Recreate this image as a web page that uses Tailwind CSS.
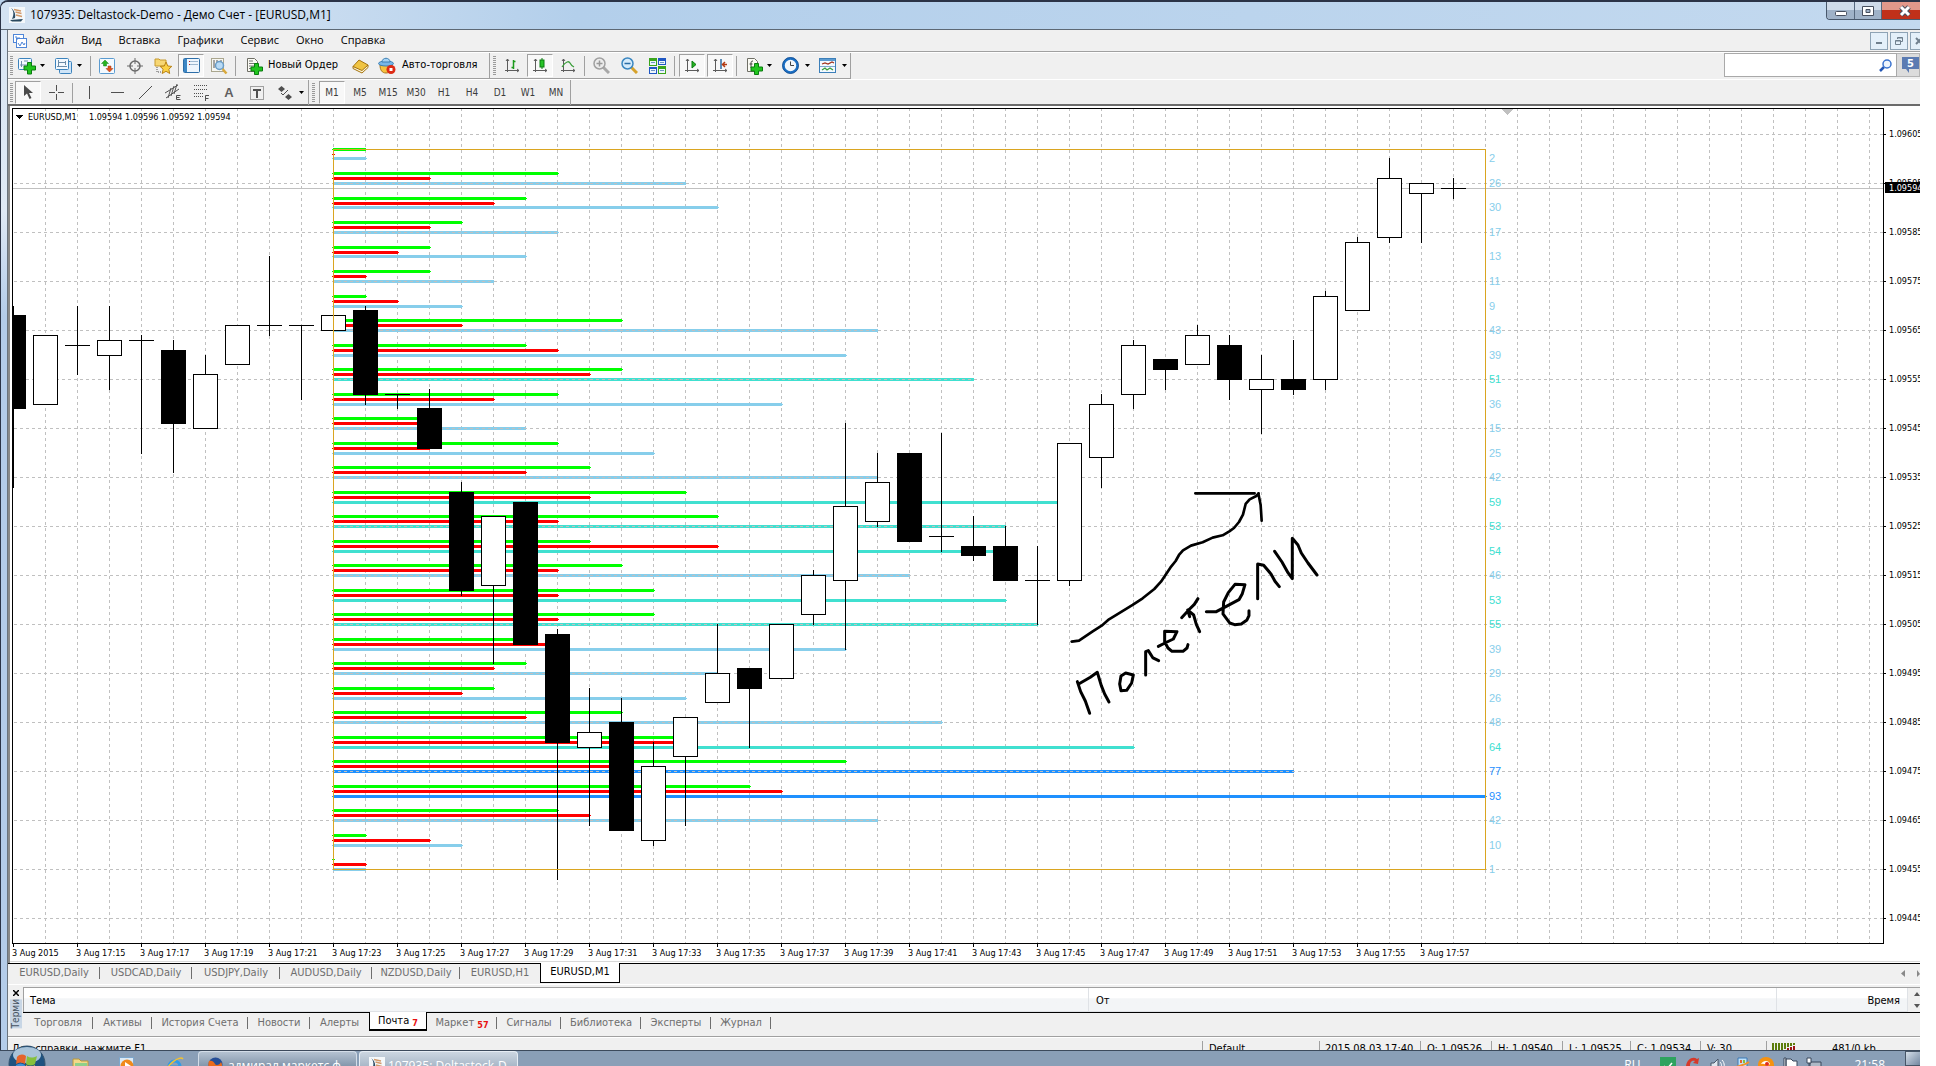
<!DOCTYPE html>
<html lang="ru">
<head>
  <meta charset="UTF-8">
  <meta name="viewport" content="width=device-width, initial-scale=1.0">
  <title>107935: Deltastock-Demo - Демо Счет - [EURUSD,M1]</title>
  <script src="https://cdn.jsdelivr.net/npm/@tailwindcss/browser@4"></script>
</head>
<body class="h-screen overflow-hidden bg-white pr-4 font-['DejaVu_Sans_Condensed','DejaVu_Sans',sans-serif] text-[11px] text-black">
  <div class="flex h-full flex-col overflow-hidden bg-[#b9d1ea]">

    <div class="flex min-h-0 flex-1 flex-col overflow-hidden rounded-tl-lg border-l border-t-2 border-[#2b3346] bg-gradient-to-b from-[#d9e6f4] via-[#dfe9f5] via-20% to-[#b4cce9] to-30%">
      <!-- Title bar -->
      <header class="flex h-7 shrink-0 items-start justify-between border-b border-[#5d6874] bg-gradient-to-r from-[#d3e2f2] from-10% via-[#b3cfeb] via-30% to-[#c3d9ef] pl-2 font-['Open_Sans','Noto_Sans',sans-serif] text-[12px]">
        <div class="flex h-[25px] items-center gap-[5px]">
          <svg class="size-4" viewBox="0 0 16 16"><rect width="16" height="16" fill="#f4f8fb"/><path d="M2 1c3 3 3 7 1 11l3-1C7 7 5 3 2 1z" fill="#2c4d66"/><path d="M5 2.500l7 1.500M6.500 5l6 1.500M7 8l6 1.500" stroke="#d39a6a" stroke-width="1.500"/><path d="M1 13l13-1-2 2.500H3z" fill="#28485f"/></svg>
          <h1>107935: Deltastock-Demo - Демо Счет - [EURUSD,M1]</h1>
        </div>
        <div class="flex h-[18px] overflow-hidden rounded-bl border-b border-l border-[#48586c]">
          <button aria-label="Свернуть" class="flex w-7 items-center justify-center border-r border-[#56687e] bg-gradient-to-b from-[#cfdbe9] from-50% to-[#9fb2c8] to-50%"><svg class="h-3 w-3" viewBox="0 0 12 12"><rect x=".5" y="6.500" width="11" height="4" rx="1" fill="#fff" stroke="#474f5e"/></svg></button>
          <button aria-label="Развернуть" class="flex w-[27px] items-center justify-center border-r border-[#56687e] bg-gradient-to-b from-[#cfdbe9] from-50% to-[#9fb2c8] to-50%"><svg class="h-3 w-3" viewBox="0 0 12 12"><path d="M.5 1.500h11v9H.5zM4 4.500h4v3H4z" fill="#fff" fill-rule="evenodd" stroke="#474f5e"/></svg></button>
          <button aria-label="Закрыть" class="flex w-[38px] items-center justify-center bg-gradient-to-b from-[#e2988a] from-45% to-[#c0301a] to-50% pl-2"><svg class="h-3 w-3" viewBox="0 0 12 12"><path d="M2 2l8 8M10 2l-8 8" stroke="#474f5e" stroke-width="5"/><path d="M2 2l8 8M10 2l-8 8" stroke="#fff" stroke-width="3"/></svg></button>
        </div>
      </header>

      <div class="ml-[6px] flex min-h-0 flex-1 flex-col border-l border-[#6b747e] bg-[#f0f0f0]">
        <!-- Main menu -->
        <nav class="flex h-[22px] shrink-0 items-center border-b border-[#a0a0a0] font-['Open_Sans','Noto_Sans',sans-serif] text-[11px]">
          <svg class="ml-[5px] size-[14px]" viewBox="0 0 14 14" fill="none" stroke="#4f86d8"><rect x=".5" y=".5" width="10" height="8" fill="#fff"/><rect x="3.500" y="4.500" width="10" height="9" fill="#fff"/><path d="M2 3h2v3M6 3v2M5 9l2 3 2-4 2 3 1-2"/></svg>
          <div class="ml-[9px] flex gap-[17px]">
            <button>Файл</button>
            <button>Вид</button>
            <button>Вставка</button>
            <button>Графики</button>
            <button>Сервис</button>
            <button>Окно</button>
            <button>Справка</button>
          </div>
          <div class="ml-auto flex w-[50px] shrink-0 gap-[2px] overflow-hidden">
            <button aria-label="Свернуть окно" class="flex h-[18px] w-[18px] shrink-0 items-center justify-center border border-[#8ea3b5] bg-[#e4f0fa]"><svg class="size-2" viewBox="0 0 8 8"><path d="M1 6h6" stroke="#70808e" stroke-width="2"/></svg></button>
            <button aria-label="Восстановить окно" class="flex h-[18px] w-[18px] shrink-0 items-center justify-center border border-[#8ea3b5] bg-[#e4f0fa]"><svg class="size-2" viewBox="0 0 8 8" fill="none" stroke="#70808e"><path d="M2.500 2V.500h5v4H6M.500 3.500h5v4h-5zM.500 4h5M2.500 1h5"/></svg></button>
            <button aria-label="Закрыть окно" class="flex h-[18px] w-[18px] shrink-0 items-center justify-center border border-[#8ea3b5] bg-[#e4f0fa]"><svg class="size-2" viewBox="0 0 8 8"><path d="M1 1l6 6M7 1L1 7" stroke="#70808e" stroke-width="2"/></svg></button>
          </div>
        </nav>

        <!-- Standard toolbar -->
        <div class="flex h-[27px] shrink-0 items-start border-t border-white">
          <div class="flex h-[26px] items-center border-r border-b border-[#a0a0a0]">
            <i class="mr-px ml-[2px] h-5 w-[3px] bg-[repeating-linear-gradient(#9a9a9a_0_1px,transparent_1px_2px)]"></i>
            <button aria-label="Новый график" class="flex h-6 w-[37px] items-center gap-1 pl-1">
              <svg class="size-[18px]" viewBox="0 0 18 18"><rect x=".5" y="1.500" width="13" height="11" rx="1" fill="#f3f9ff" stroke="#3c83bd"/><path d="M3.500 4v6M2 8h8M6 4h4" stroke="#6c8ca8" fill="none"/><path d="M9.500 5.500h4v3.500h4v4h-4v4h-4v-4H6V9h3.500z" fill="#22c51f" stroke="#0b7c10"/></svg>
              <svg class="h-[3px] w-[5px]" viewBox="0 0 5 3"><path d="M0 0h5L2.500 3z"/></svg>
            </button>
            <button aria-label="Профили" class="flex h-6 w-[37px] items-center gap-1 pl-1">
              <svg class="size-[18px]" viewBox="0 0 18 18"><rect x="4.500" y="4.500" width="12" height="12" rx="1" fill="#cfe5f8" stroke="#3c83bd"/><rect x=".5" y="1.500" width="13" height="11" rx="1" fill="#f3f9ff" stroke="#3c83bd"/><path d="M3.500 3v7M2 9.500h10M3 5.500h8M10.500 4v4" stroke="#6c8ca8" fill="none"/></svg>
              <svg class="h-[3px] w-[5px]" viewBox="0 0 5 3"><path d="M0 0h5L2.500 3z"/></svg>
            </button>
            <i class="mx-[2px] h-5 w-px bg-[#a0a0a0]"></i>
            <button aria-label="Обзор рынка" class="flex h-6 w-7 items-center justify-center"><svg class="size-4" viewBox="0 0 16 16"><rect x=".5" y=".5" width="15" height="15" rx="1" fill="#f4faff" stroke="#5b9bd0"/><path d="M6 2l3.500 3.500H7.500V8h-3V5.500H2.500z" fill="#25b321" stroke="#14801a" stroke-width=".5"/><path d="M10.500 14L7 10.500h2V8h3v2.500h2z" fill="#e0531f" stroke="#a33710" stroke-width=".5"/></svg></button>
            <button aria-label="Окно данных" class="flex h-6 w-7 items-center justify-center"><svg class="size-4" viewBox="0 0 16 16" fill="none" stroke="#6b6b6b"><circle cx="8" cy="8" r="5" stroke-width="1.500"/><path d="M8 0v6M8 10v6M0 8h6M10 8h6"/></svg></button>
            <button aria-label="Навигатор" class="flex h-6 w-7 items-center justify-center"><svg class="size-[18px]" viewBox="0 0 18 18"><path d="M1 2h4l1 1h6v6H1z" fill="#f7d774" stroke="#c69a2e"/><path d="M3 10v5h5" stroke="#555" stroke-dasharray="1 1" fill="none"/><path d="M12 5l1.800 4 4 .4-3 2.800.9 4.300L12 14.300l-3.800 2.200.9-4.300-3-2.800 4.200-.4z" fill="#fbd145" stroke="#b98316"/></svg></button>
            <button aria-label="Терминал" class="mx-px flex h-[23px] w-[26px] items-center justify-center border border-white border-t-[#a0a0a0] border-l-[#a0a0a0] bg-[#f8f8f8]"><svg class="h-[15px] w-[17px]" viewBox="0 0 17 15"><rect x=".5" y=".5" width="16" height="14" rx="1" fill="#eef6fd" stroke="#2d6ea8"/><path d="M1 1h3v13H1z" fill="#3d87c5"/><path d="M6 3.500h9M6 6.500h9" stroke="#9db8d0"/><path d="M6 3.500h1M6 6.500h1" stroke="#b22"/></svg></button>
            <button aria-label="Тестер стратегий" class="flex h-6 w-7 items-center justify-center"><svg class="size-[18px]" viewBox="0 0 18 18"><rect x="1.500" y="1.500" width="12" height="13" fill="#f7f7f2" stroke="#aaa68f"/><path d="M4 3v8M7 3v3M11 3v4" stroke="#555"/><circle cx="9.500" cy="8.500" r="4" fill="#b9dbf5" stroke="#6a9cc5" stroke-width="1.500"/><path d="M12.500 12l4 4.500" stroke="#d9a93c" stroke-width="2.500"/></svg></button>
            <i class="mx-[2px] h-5 w-px bg-[#a0a0a0]"></i>
            <button class="flex h-6 w-[108px] items-center gap-[5px] pl-2 whitespace-nowrap">
              <svg class="h-[18px] w-[17px] shrink-0" viewBox="0 0 17 18"><path d="M1.500 1.500h7l3 3v10h-10z" fill="#fbfbf4" stroke="#6f6f66"/><path d="M3 4h4M3 6.500h6M3 9h6M3 11.500h4" stroke="#777"/><path d="M8.500 6.500h4v3.500h4v4h-4v3.500h-4V14H5v-4h3.500z" fill="#22c51f" stroke="#0b7c10"/></svg>
              Новый Ордер</button>
            <button aria-label="MetaEditor" class="flex h-6 w-7 items-center justify-center"><svg class="h-4 w-[17px]" viewBox="0 0 17 16"><path d="M1 8.500L7 2l9 5-6 7z" fill="#f0c443" stroke="#a5730f"/><path d="M1 8.500l9 4 6-5.500v2.500L10 15 1 10.500z" fill="#fbf3d4" stroke="#a5730f"/></svg></button>
            <button class="flex h-6 w-[115px] items-center gap-[6px] pl-1 whitespace-nowrap">
              <svg class="size-[18px] shrink-0" viewBox="0 0 18 18"><path d="M2 8h12c0 5-2 8-6 8S2 13 2 8z" fill="#f6c23e" stroke="#a9741a"/><ellipse cx="8" cy="6.500" rx="7.500" ry="2.500" fill="#79b7e8" stroke="#3e80b4"/><path d="M4 5c0-5 8-5 8 0z" fill="#a5d2f4" stroke="#3e80b4"/><circle cx="13" cy="12.500" r="4.500" fill="#dd2c16"/><rect x="11.500" y="11" width="3" height="3" fill="#fff"/></svg>
              Авто-торговля</button>
          </div>
          <div class="flex h-[26px] items-center border-r border-b border-[#a0a0a0]">
            <i class="mr-[2px] ml-[3px] h-5 w-[3px] bg-[repeating-linear-gradient(#9a9a9a_0_1px,transparent_1px_2px)]"></i>
            <button aria-label="Бары" class="flex h-6 w-7 items-center justify-center"><svg class="size-[15px]" viewBox="0 0 15 15" fill="none"><path d="M2.500 1v13M0 12.500h14M1 3l1.500-2L4 3M12 11l2 1.500-2 1.500" stroke="#5c5c5c"/><path d="M8.500 2v9M6.500 9.500h2M8.500 3.500h2" stroke="#1c9a1c" stroke-width="1.500"/></svg></button>
            <button aria-label="Японские свечи" class="mx-px flex h-[23px] w-[26px] items-center justify-center border border-white border-t-[#a0a0a0] border-l-[#a0a0a0] bg-[#f8f8f8]"><svg class="size-[15px]" viewBox="0 0 15 15" fill="none"><path d="M2.500 1v13M0 12.500h14M1 3l1.500-2L4 3M12 11l2 1.500-2 1.500" stroke="#5c5c5c"/><path d="M9 0v11" stroke="#0b7c10"/><rect x="7" y="2" width="4" height="7" fill="#27c427" stroke="#0b7c10"/></svg></button>
            <button aria-label="Линия" class="flex h-6 w-7 items-center justify-center"><svg class="size-[15px]" viewBox="0 0 15 15" fill="none"><path d="M2.500 1v13M0 12.500h14M1 3l1.500-2L4 3M12 11l2 1.500-2 1.500" stroke="#5c5c5c"/><path d="M1 9C5 3 8 3 9 5s2 3 4 4" stroke="#3a9e3a" stroke-width="1.300"/></svg></button>
            <i class="mx-[2px] h-5 w-px bg-[#a0a0a0]"></i>
            <button aria-label="Увеличить" class="flex h-6 w-7 items-center justify-center"><svg class="size-[17px]" viewBox="0 0 17 17"><path d="M10 10l6 6" stroke="#a8a8a8" stroke-width="3"/><circle cx="6.500" cy="6.500" r="5.500" fill="#ececec" stroke="#a0a0a0" stroke-width="1.500"/><path d="M3.500 6.500h6M6.500 3.500v6" stroke="#999" stroke-width="1.500"/></svg></button>
            <button aria-label="Уменьшить" class="flex h-6 w-7 items-center justify-center"><svg class="size-[17px]" viewBox="0 0 17 17"><path d="M10 10l6 6" stroke="#d6a22b" stroke-width="3"/><circle cx="6.500" cy="6.500" r="5.500" fill="#d5ebfb" stroke="#3a86c0" stroke-width="1.500"/><path d="M3.500 6.500h6" stroke="#2a6da5" stroke-width="1.500"/></svg></button>
            <button aria-label="Окна рядом" class="flex h-6 w-7 items-center justify-center"><svg class="h-4 w-[17px]" viewBox="0 0 17 16"><path d="M0 0h8v8H0zM9 8h8v8H9z" fill="#3aa51c"/><path d="M9 0h8v7H9zM0 9h8v7H0z" fill="#1f57c3"/><path d="M1 3h6v4H1zM10 3h6v3h-6zM1 11h6v4H1zM10 11h6v4h-6z" fill="#eef5fb"/><path d="M2 4.500h4M11 4.500h4M2 12.500h4M11 12.500h4" stroke="#6f95c4"/></svg></button>
            <i class="mx-[3px] h-5 w-px bg-[#a0a0a0]"></i>
            <button aria-label="Автопрокрутка" class="mx-px flex h-[23px] w-[26px] items-center justify-center border border-white border-t-[#a0a0a0] border-l-[#a0a0a0] bg-[#f8f8f8]"><svg class="size-[15px]" viewBox="0 0 15 15" fill="none"><path d="M2.500 1v13M0 12.500h14M1 3l1.500-2L4 3M12 11l2 1.500-2 1.500" stroke="#5c5c5c"/><path d="M7 3v7l4-3.500z" fill="#25b321" stroke="#0b7c10"/></svg></button>
            <button aria-label="Сдвиг графика" class="mx-px flex h-[23px] w-[26px] items-center justify-center border border-white border-t-[#a0a0a0] border-l-[#a0a0a0] bg-[#f8f8f8]"><svg class="size-[15px]" viewBox="0 0 15 15" fill="none"><path d="M2.500 1v13M0 12.500h14M1 3l1.500-2L4 3M12 11l2 1.500-2 1.500" stroke="#5c5c5c"/><path d="M8 1v10" stroke="#2c6aa0" stroke-width="1.500"/><path d="M14 6.500H9M12 4L9.500 6.500 12 9" stroke="#b33a12" stroke-width="1.500"/></svg></button>
            <i class="mx-[2px] h-5 w-px bg-[#a0a0a0]"></i>
            <button aria-label="Индикаторы" class="flex h-6 w-[37px] items-center gap-1 pl-[7px]">
              <svg class="h-[18px] w-[17px]" viewBox="0 0 17 18"><path d="M1.500 1.500h7l3 3v10h-10z" fill="#fbfbf4" stroke="#6f6f66"/><path d="M7 4c-2 0-2 1-2 3v4M3.500 7h3" stroke="#444" fill="none"/><path d="M8.500 6.500h4v3.500h4v4h-4v3.500h-4V14H5v-4h3.500z" fill="#22c51f" stroke="#0b7c10"/></svg>
              <svg class="h-[3px] w-[5px]" viewBox="0 0 5 3"><path d="M0 0h5L2.500 3z"/></svg>
            </button>
            <button aria-label="Периоды" class="flex h-6 w-[37px] items-center gap-[6px] pl-[6px]">
              <svg class="size-[17px]" viewBox="0 0 17 17"><circle cx="8.500" cy="8.500" r="7" fill="#f2f6fa" stroke="#1b6fc4" stroke-width="2.500"/><circle cx="8.500" cy="8.500" r="8" fill="none" stroke="#124a8c" stroke-width=".8"/><path d="M8.500 4.500v4h3.500" stroke="#444" fill="none"/></svg>
              <svg class="h-[3px] w-[5px]" viewBox="0 0 5 3"><path d="M0 0h5L2.500 3z"/></svg>
            </button>
            <button aria-label="Шаблоны" class="flex h-6 w-[37px] items-center gap-[6px] pl-[6px]">
              <svg class="h-[15px] w-[17px]" viewBox="0 0 17 15"><rect x=".5" y=".5" width="16" height="14" fill="#f3f9ff" stroke="#3c7fb9"/><path d="M1 1h15v2H1z" fill="#5c9bd0"/><path d="M3 6l3-1 3 1 4-2 2 1" stroke="#a0321c" fill="none" stroke-width="1.300"/><path d="M1 8.500h15" stroke="#7ca9cf"/><path d="M3 12l3-2 2 2 3-2 3 2" stroke="#3a9e3a" fill="none" stroke-width="1.300"/></svg>
              <svg class="h-[3px] w-[5px]" viewBox="0 0 5 3"><path d="M0 0h5L2.500 3z"/></svg>
            </button>
          </div>
          <form class="ml-auto flex h-6 w-[196px] overflow-hidden" onsubmit="return false">
            <label class="flex w-[173px] shrink-0 items-center border border-[#a9a9a9] bg-white pr-1">
              <input type="search" aria-label="Поиск" class="min-w-0 flex-1 px-1 outline-none">
              <svg class="size-[13px]" viewBox="0 0 13 13" fill="none"><path d="M1 12l4-4" stroke="#2456b5" stroke-width="2.500"/><circle cx="8" cy="5" r="4" fill="#eef5fd" stroke="#3a73cf" stroke-width="1.500"/></svg>
            </label>
            <button aria-label="Сообщения: 5" class="flex flex-1 items-center border border-l-0 border-[#b5b5b5] bg-[#dcdcdc] pl-[5px]"><svg class="h-4 w-[17px] shrink-0" viewBox="0 0 17 16"><path d="M0 0h17v12H7v4l-3-4H0z" fill="#5b7bb2"/><text x="5" y="10" font-size="11" font-weight="bold" fill="#fff">5</text></svg></button>
          </form>
        </div>

        <!-- Drawing tools and periods -->
        <div class="flex h-[27px] shrink-0 items-start border-t border-b-2 border-t-white border-b-[#6b6b6b] text-[10px] text-[#3c3c3c]">
          <div class="flex h-[25px] items-center border-r border-[#a0a0a0]">
            <i class="mr-px ml-[2px] h-5 w-[3px] bg-[repeating-linear-gradient(#9a9a9a_0_1px,transparent_1px_2px)]"></i>
            <button aria-label="Курсор" class="mx-px flex h-[23px] w-[26px] items-center justify-center border border-white border-t-[#a0a0a0] border-l-[#a0a0a0] bg-[#f8f8f8]"><svg class="h-[15px] w-[10px]" viewBox="0 0 10 15"><path d="M1 0v11l3-2.500L6.500 14l2-1L6 8h4z" fill="#4a4a4a"/></svg></button>
            <button aria-label="Перекрестие" class="flex h-6 w-7 items-center justify-center"><svg class="size-[15px]" viewBox="0 0 15 15"><path d="M7.500 0v6M7.500 9v6M0 7.500h6M9 7.500h6" stroke="#505050"/></svg></button>
            <i class="mx-[2px] h-5 w-px bg-[#a0a0a0]"></i>
            <button aria-label="Вертикальная линия" class="flex h-6 w-7 items-center justify-center"><svg class="size-[13px]" viewBox="0 0 13 13"><path d="M6.500 0v13" stroke="#505050"/></svg></button>
            <button aria-label="Горизонтальная линия" class="flex h-6 w-7 items-center justify-center"><svg class="size-[13px]" viewBox="0 0 13 13"><path d="M0 6.500h13" stroke="#505050"/></svg></button>
            <button aria-label="Трендовая линия" class="flex h-6 w-7 items-center justify-center"><svg class="size-[13px]" viewBox="0 0 13 13"><path d="M0 13L13 0" stroke="#505050"/></svg></button>
            <button aria-label="Равноудаленный канал" class="flex h-6 w-7 items-center justify-center"><svg class="h-[17px] w-4" viewBox="0 0 16 17" stroke="#505050" fill="none"><path d="M0 9L13 1M1 14L14 5M3 14L6 4M6 12L9 2M9 10l3-10"/><path d="M15.500 11.500h-4v4h4M11.500 13.500h3"/></svg></button>
            <button aria-label="Линии Фибоначчи" class="flex h-6 w-7 items-center justify-center"><svg class="h-[17px] w-[15px]" viewBox="0 0 15 17" stroke="#505050" fill="none"><path d="M0 1.500h13M0 5.500h13M0 9.500h10M0 12.500h9" stroke-dasharray="1 1"/><path d="M11.500 17v-5.500h3.500M11.500 14.500h3"/></svg></button>
            <button aria-label="Текст" class="flex h-6 w-7 items-center justify-center font-['Liberation_Sans',sans-serif] text-[13px] font-bold text-[#606060]">A</button>
            <button aria-label="Метка" class="flex h-6 w-7 items-center justify-center"><svg class="size-[14px]" viewBox="0 0 14 14" fill="none" stroke="#505050"><path d="M.5.500h13v13H.500z" stroke-dasharray="1 1"/><path d="M3 4h8M7 4v8" stroke-width="2"/></svg></button>
            <button aria-label="Стрелки" class="flex h-6 w-[37px] items-center gap-[7px] pl-[7px]">
              <svg class="size-[14px]" viewBox="0 0 14 14" fill="#505050"><path d="M3.500 0L7 3 3.500 6 0 3zM10.500 8l3.500 3-3.500 3L7 11z"/><path d="M3 7l2 2 5-5" stroke="#505050" fill="none"/></svg>
              <svg class="h-[3px] w-[5px]" viewBox="0 0 5 3"><path d="M0 0h5L2.500 3z"/></svg>
            </button>
          </div>
          <div class="flex h-[25px] items-center border-r border-[#a0a0a0]">
            <i class="mx-[3px] h-5 w-[3px] bg-[repeating-linear-gradient(#9a9a9a_0_1px,transparent_1px_2px)]"></i>
            <button class="mx-px h-[23px] w-[26px] border border-white border-t-[#a0a0a0] border-l-[#a0a0a0] bg-[#f8f8f8]">M1</button>
            <button class="h-6 w-7">M5</button>
            <button class="h-6 w-7">M15</button>
            <button class="h-6 w-7">M30</button>
            <button class="h-6 w-7">H1</button>
            <button class="h-6 w-7">H4</button>
            <button class="h-6 w-7">D1</button>
            <button class="h-6 w-7">W1</button>
            <button class="h-6 w-7">MN</button>
          </div>
        </div>

        <!-- Chart -->
        <main class="min-h-0 flex-1 overflow-hidden border-l-2 border-[#8a8a8a] bg-white">
          <svg id="chart" class="block h-full w-full" viewBox="10 106 1910 857" preserveAspectRatio="xMinYMin slice" shape-rendering="crispEdges" font-size="9"></svg>
        </main>

        <!-- Chart tabs -->
        <div class="flex h-[21px] shrink-0 items-start border-t border-black text-[#6e6e6e]">
          <button class="h-[18px] w-[92px] bg-[linear-gradient(#6e6e6e,#6e6e6e)] bg-[length:1px_12px] bg-right bg-no-repeat">EURUSD,Daily</button>
          <button class="h-[18px] w-[92px] bg-[linear-gradient(#6e6e6e,#6e6e6e)] bg-[length:1px_12px] bg-right bg-no-repeat">USDCAD,Daily</button>
          <button class="h-[18px] w-[88px] bg-[linear-gradient(#6e6e6e,#6e6e6e)] bg-[length:1px_12px] bg-right bg-no-repeat">USDJPY,Daily</button>
          <button class="h-[18px] w-[92px] bg-[linear-gradient(#6e6e6e,#6e6e6e)] bg-[length:1px_12px] bg-right bg-no-repeat">AUDUSD,Daily</button>
          <button class="h-[18px] w-[88px] bg-[linear-gradient(#6e6e6e,#6e6e6e)] bg-[length:1px_12px] bg-right bg-no-repeat">NZDUSD,Daily</button>
          <button class="h-[18px] w-[80px]">EURUSD,H1</button>
          <button class="-mt-px h-[20px] w-[80px] border border-t-0 border-black bg-white text-black">EURUSD,M1</button>
          <div class="mt-[6px] ml-auto flex gap-3 overflow-hidden">
            <button aria-label="Назад"><svg class="block h-[7px] w-1" viewBox="0 0 4 7"><path d="M4 0v7L0 3.500z" fill="#888"/></svg></button>
            <button aria-label="Вперед"><svg class="block h-[7px] w-[3px]" viewBox="0 0 3 7"><path d="M0 0v7l3-3z" fill="#888"/></svg></button>
          </div>
        </div>

        <!-- Terminal -->
        <section class="flex h-[53px] shrink-0 border-t border-b border-t-white border-b-[#a0a0a0]">
          <div class="flex w-[15px] flex-col items-center gap-[3px] pt-[5px]">
            <button aria-label="Закрыть терминал"><svg class="block size-[6px]" viewBox="0 0 6 6"><path d="M0 0l6 6M6 0L0 6" stroke="#000" stroke-width="1.500"/></svg></button>
            <span class="rotate-180 bg-[#c8d6e5] text-[10px] leading-3 text-[#44525f] [writing-mode:vertical-rl]">Терми</span>
          </div>
          <div class="mt-[2px] min-w-0 flex-1">
            <div class="flex h-[25px] border-t border-l border-[#a0a0a0] bg-white">
              <table class="h-[24px] flex-1 table-fixed border-collapse bg-gradient-to-b from-white from-40% to-[#f3f5f7] to-45%">
                <colgroup><col><col class="w-[688px]"><col class="w-[131px]"></colgroup>
                <thead><tr>
                  <th class="border-r border-b border-[#dfe2e6] pt-[3px] pl-[6px] text-left font-normal">Тема</th>
                  <th class="border-r border-b border-[#dfe2e6] pt-[3px] pl-[7px] text-left font-normal">От</th>
                  <th class="border-r border-b border-[#dfe2e6] pt-[3px] pr-[7px] text-right font-normal">Время</th>
                </tr></thead>
              </table>
              <div class="flex w-3 flex-col items-end justify-between bg-[#f0f0f0] py-1">
                <svg class="h-1 w-[6px]" viewBox="0 0 6 4"><path d="M0 4h6L3 0z" fill="#555"/></svg>
                <svg class="h-1 w-[6px]" viewBox="0 0 6 4"><path d="M0 0h6L3 4z" fill="#555"/></svg>
              </div>
            </div>
            <div class="flex h-[20px] items-start border-t border-black text-[#6e6e6e]">
              <button class="h-5 w-[70px] bg-[linear-gradient(#6e6e6e,#6e6e6e)] bg-[length:1px_12px] bg-right bg-no-repeat">Торговля</button>
              <button class="h-5 w-[59px] bg-[linear-gradient(#6e6e6e,#6e6e6e)] bg-[length:1px_12px] bg-right bg-no-repeat">Активы</button>
              <button class="h-5 w-[96px] bg-[linear-gradient(#6e6e6e,#6e6e6e)] bg-[length:1px_12px] bg-right bg-no-repeat">История Счета</button>
              <button class="h-5 w-[62px] bg-[linear-gradient(#6e6e6e,#6e6e6e)] bg-[length:1px_12px] bg-right bg-no-repeat">Новости</button>
              <button class="h-5 w-[59px]">Алерты</button>
              <button class="-mt-px h-[19px] w-[58px] border border-t-0 border-b-2 border-black bg-white leading-4 text-black">Почта <sub class="text-[9px] leading-none font-bold text-[#e81010]">7</sub></button>
              <button class="h-5 w-[70px] bg-[linear-gradient(#6e6e6e,#6e6e6e)] bg-[length:1px_12px] bg-right bg-no-repeat">Маркет <sub class="text-[9px] leading-none font-bold text-[#e81010]">57</sub></button>
              <button class="h-5 w-[64px] bg-[linear-gradient(#6e6e6e,#6e6e6e)] bg-[length:1px_12px] bg-right bg-no-repeat">Сигналы</button>
              <button class="h-5 w-[80px] bg-[linear-gradient(#6e6e6e,#6e6e6e)] bg-[length:1px_12px] bg-right bg-no-repeat">Библиотека</button>
              <button class="h-5 w-[70px] bg-[linear-gradient(#6e6e6e,#6e6e6e)] bg-[length:1px_12px] bg-right bg-no-repeat">Эксперты</button>
              <button class="h-5 w-[60px] bg-[linear-gradient(#6e6e6e,#6e6e6e)] bg-[length:1px_12px] bg-right bg-no-repeat">Журнал</button>
            </div>
          </div>
        </section>

        <!-- Status bar -->
        <footer class="flex h-[13px] shrink-0 items-start overflow-hidden border-t border-white pt-[3px] leading-4 whitespace-nowrap">
          <span class="flex-1 pl-1">Для справки, нажмите F1</span>
          <span class="w-[117px] border-l border-[#a0a0a0] pl-[6px]">Default</span>
          <span class="w-[101px] border-l border-[#a0a0a0] pl-[5px]">2015.08.03 17:40</span>
          <span class="w-[71px] border-l border-[#a0a0a0] pl-[6px]">O: 1.09526</span>
          <span class="w-[71px] border-l border-[#a0a0a0] pl-[6px]">H: 1.09540</span>
          <span class="w-[68px] border-l border-[#a0a0a0] pl-[6px]">L: 1.09525</span>
          <span class="w-[70px] border-l border-[#a0a0a0] pl-[6px]">C: 1.09534</span>
          <span class="w-[66px] border-l border-[#a0a0a0] pl-[6px]">V: 30</span>
          <span class="flex w-[154px] border-l border-[#a0a0a0] pl-[5px]">
            <svg class="mt-[2px] mr-9 h-[9px] w-6" viewBox="0 0 24 9"><path d="M1 0v9M4 0v9M7 0v9M10 0v9M13 0v6M16 0v4M19 0v3M22 0v2" stroke="#5d7d0c" stroke-width="2"/><path d="M13 7v2M16 5v4M19 4v5M22 3v6" stroke="#9c1414" stroke-width="2"/></svg>481/0 kb
          </span>
        </footer>
      </div>
    </div>

    <!-- Windows taskbar -->
    <div class="relative flex h-4 shrink-0 items-start border-t border-[#3c4a5c] bg-[#8a9fb7] font-['Open_Sans','Noto_Sans',sans-serif] text-[12px] text-white">
      <button aria-label="Пуск" class="absolute -top-[6px] left-2 h-[22px] w-[38px] overflow-hidden">
        <svg class="block h-[38px] w-[38px]" viewBox="0 0 38 38"><circle cx="19" cy="19" r="18" fill="#1e5280" stroke="#35536e"/><ellipse cx="19" cy="10" rx="14" ry="8" fill="#a9c3d8"/><path d="M9 12c3-3 6-3 9-1l-1 8c-3-2-6-2-9 0z" fill="#e5632a"/><path d="M19 11c3 2 6 2 10 0l-2 8c-3 2-6 2-9 0z" fill="#86c03c"/><path d="M8 20c3-2 6-2 9 0l-1 8c-3-2-5-2-9 0z" fill="#3d8fd6"/><path d="M18 20c3 2 6 2 9 0l-1 8c-4 2-6 2-9 0z" fill="#f5c431"/></svg>
      </button>
      <div class="flex h-full gap-[30px] overflow-hidden pt-[6px] pl-[72px]">
        <button aria-label="Проводник" class="h-[18px] w-[17px]"><svg class="block" viewBox="0 0 17 18"><path d="M1 2h6l2 2h7v13H1z" fill="#f1d989" stroke="#b9973c"/><path d="M3 6h12v6H3z" fill="#8fd08a"/></svg></button>
        <button aria-label="Проигрыватель" class="h-[18px] w-[17px]"><svg class="block" viewBox="0 0 17 18"><rect x=".5" y=".5" width="14" height="17" fill="#dceaf6" stroke="#7da7cd"/><circle cx="8" cy="9" r="6.500" fill="#f08a1d"/><path d="M6 5v8l6-4z" fill="#fff"/></svg></button>
        <button aria-label="Internet Explorer" class="h-[18px] w-[18px]"><svg class="block" viewBox="0 0 18 18" fill="none"><path d="M3 10h11c0-8-11-8-11 0 0 7 8 7 10 3" stroke="#2f9be8" stroke-width="3"/><path d="M1 15C0 8 14-2 17 2" stroke="#f2c230" stroke-width="1.500"/></svg></button>
      </div>
      <button class="ml-[14px] flex h-full w-[159px] items-start gap-[5px] overflow-hidden rounded-t-sm border border-b-0 border-[#d3dde8] bg-gradient-to-b from-[#b4c2d1] to-[#8497ac] pt-[5px] pl-[9px] whitespace-nowrap">
        <svg class="size-[15px] shrink-0" viewBox="0 0 15 15"><circle cx="7.500" cy="7.500" r="7" fill="#274f97"/><path d="M1 4c3-1 5 1 6 3s5 1 6-2c3 5-1 10-6 10S-1 9 1 4z" fill="#ea6a1c"/></svg><span>адмирал маркетс ф...</span></button>
      <button class="ml-[2px] flex h-full w-[159px] items-start gap-[3px] overflow-hidden rounded-t-sm border border-b-0 border-[#e6edf4] bg-gradient-to-b from-[#ccd6e1] to-[#a9b8c8] pt-[5px] pl-[9px] whitespace-nowrap">
        <svg class="size-4 shrink-0" viewBox="0 0 16 16"><rect width="16" height="16" fill="#f4f8fb"/><path d="M2 1c3 3 3 7 1 11l3-1C7 7 5 3 2 1z" fill="#2c4d66"/><path d="M5 2.500l7 1.500M6.500 5l6 1.500M7 8l6 1.500" stroke="#d39a6a" stroke-width="1.500"/></svg><span>107935: Deltastock-D...</span></button>
      <div class="ml-auto flex h-full items-start gap-2 overflow-hidden pt-[6px]">
        <span class="mr-3 -mt-px">RU</span>
        <svg class="h-4 w-4" viewBox="0 0 16 16"><rect width="16" height="16" fill="#2ea35f"/><path d="M4 9l3 3 5-6" stroke="#fff" fill="none" stroke-width="1.500"/></svg>
        <svg class="mx-[2px] h-4 w-[14px]" viewBox="0 0 14 16"><path d="M0 9C1 2 7-1 11 2l2-1-1 6-5-1 2-2C5 3 4 6 4 9z" fill="#d5392a"/><path d="M5 16c0-5 3-6 8-7l-2 6z" fill="#2b66b8"/></svg>
        <svg class="h-4 w-4" viewBox="0 0 16 16" fill="none" stroke="#fff"><path d="M1 6h3l4-4v12l-4-4H1z" fill="#dfe6ee" stroke="#465567"/><path d="M10 5c2 2 2 5 0 7M12 3c3 3 3 8 0 11"/></svg>
        <svg class="h-4 w-4" viewBox="0 0 16 16"><path d="M4 1h9v10H4z" fill="#bfe2fb" stroke="#3a79b6"/><path d="M6 3h2v3H6z" fill="#e5632a"/><path d="M9 3h2v3H9z" fill="#86c03c"/><path d="M1 13C0 8 8 10 15 5" stroke="#f0912a" stroke-width="2" fill="none"/></svg>
        <svg class="h-4 w-4" viewBox="0 0 16 16"><circle cx="8" cy="8" r="8" fill="#f6920f"/><path d="M3 7c2-4 8-4 9 0l-4 3c1-2-1-4-5-3z" fill="#fff"/><circle cx="9" cy="7" r="2" fill="#e02d1b"/></svg>
        <svg class="h-4 w-4" viewBox="0 0 16 16" stroke="#39465a"><path d="M2 1h2v15H2zM4 2h5l2 2h4v8h-4L9 10H4z" fill="#fff"/></svg>
        <svg class="h-4 w-4" viewBox="0 0 16 16" stroke="#39465a"><path d="M4 5h11v8H4z" fill="#aeb9c6"/><path d="M1 1h4v5H1zM3 6v10" fill="#fff"/></svg>
        <span class="-mt-px mr-5 ml-6">21:58</span>
      </div>
      <button aria-label="Показать рабочий стол" class="h-full w-[15px] border border-r-0 border-[#465567] bg-gradient-to-br from-[#d5dfe9] to-[#7387a0]"></button>
    </div>
  </div>

  <script>
    const out = [];
    const rect = (x, y, w, h, fill, stroke) =>
      out.push(`<rect x="${x}" y="${y}" width="${w}" height="${h}" fill="${fill}"${stroke ? ` stroke="${stroke}"` : ''}/>`);
    const line = (x1, y1, x2, y2, color, dash) =>
      out.push(`<path d="M${x1} ${y1}L${x2} ${y2}" stroke="${color}"${dash ? ' stroke-dasharray="3 3"' : ''}/>`);
    const text = (x, y, s, fill = '#000', size = 9, font = '') =>
      out.push(`<text x="${x}" y="${y}" fill="${fill}" font-size="${size}" ${font}>${s}</text>`);

    // vertical grid
    for (let x = 45.5; x < 1883; x += 32) line(x, 108, x, 943, '#c0c0c0', true);

    // volume profile rows: y, buys, sells, total
    const profile = [
      [158,1,0,2],[183,7,3,26],[207,6,5,30],[232,4,3,17],[256,3,2,13],[281,3,1,11],[306,1,2,9],
      [330,9,4,43],[355,6,7,39],[379,9,8,51],[404,7,5,36],[428,3,3,15],[453,7,3,25],[477,8,6,42],
      [502,11,8,59],[526,12,7,53],[551,8,12,54],[575,9,7,46],[600,10,7,53],[624,10,7,55],
      [649,6,7,39],[673,6,5,29],[698,5,4,26],[722,9,6,48],[747,11,11,64],[771,16,9,77],
      [796,13,14,93],[820,7,8,42],[845,1,3,10],[869,0,1,1]
    ];
    const totalColor = v => v > 70 ? '#1e90ff' : v > 50 ? '#40e0d0' : '#87ceeb';
    const bar = (y, units, color) => {
      const w = units * 32 + 1;
      rect(332, y, w + 2, 1, color);
      if (units) rect(333, y - 1, w, 3, color);
    };
    for (const [y, buy, sell, total] of profile) {
      const d = [158, 207, 256].includes(y) ? 1 : 0;
      bar(y, Math.ceil(total * 36 / 93), totalColor(total));
      bar(y - 10 + d, buy, '#00ff00');
      bar(y - 5 + d, sell, '#ff0000');
    }

    // horizontal grid and price scale
    for (let i = 0; i < 17; i++) {
      const y = 134 + i * 49;
      line(14, y + .5, 1883, y + .5, '#c0c0c0', true);
      line(1884, y + .5, 1886, y + .5, '#000');
      text(1889, y + 3, (1.09605 - i * 0.0001).toFixed(5));
    }
    line(13, 188.5, 1883, 188.5, '#c0c0c0');

    // candles: top, bottom, high, low, filled
    const candles = [
      [315,408,306,487,1],[335,404,335,404],[345,345,306,374],[340,355,306,389],[340,340,335,453],
      [350,423,340,472,1],[374,428,355,428],[325,364,325,364],[325,325,256,335],[325,325,325,399],
      [315,330,315,330],[310,394,306,404,1],[394,394,394,408],[408,448,389,448,1],[492,590,482,595,1],
      [516,585,516,663],[502,644,502,644,1],[634,742,629,879,1],[732,747,688,825],[722,830,698,830,1],
      [766,840,742,845],[717,756,717,825],[673,702,624,702],[668,688,668,747,1],[624,678,624,678],
      [575,614,570,624],[506,580,423,649],[482,521,453,526],[453,541,453,541,1],[536,536,433,551],
      [546,555,516,560,1],[546,580,526,580,1],[580,580,546,624],[443,580,443,585],[404,457,394,487],
      [345,394,340,408],[359,369,359,389,1],[335,364,325,364],[345,379,335,399,1],[379,389,355,433],
      [379,389,340,394,1],[296,379,291,389],[242,310,237,310],[178,237,158,242],[183,193,183,242],
      [188,188,178,198]
    ];
    candles.forEach(([top, bottom, high, low, filled], i) => {
      const x = 13 + i * 32, left = Math.max(x - 12, 13);
      rect(x, high, 1, low - high + 1, '#000');
      if (top === bottom || filled) rect(left, top, x + 13 - left, bottom - top + 1, '#000');
      else rect(x - 11.5, top + .5, 24, bottom - top, '#fff', '#000');
    });

    // profile frame and totals
    rect(333.5, 149.5, 1152, 720, 'none', '#daa520');
    for (const [y, , , total] of profile) text(1489, y + 4, total, totalColor(total), 11, 'font-family="Liberation Sans, sans-serif"');

    // plot frame
    line(12, 108.5, 1884, 108.5, '#000');
    line(12.5, 108, 12.5, 944, '#000');
    line(1883.5, 108, 1883.5, 944, '#000');
    line(12, 943.5, 1884, 943.5, '#000');
    line(10, 961.5, 1920, 961.5, '#d8d8d8');
    out.push('<path d="M1501 109h12l-6 6z" fill="#c0c0c0"/><path d="M16 115h7l-3.500 4z"/>');
    text(28, 120, 'EURUSD,M1');
    text(89, 120, '1.09594 1.09596 1.09592 1.09594');

    // current price
    rect(1885, 182, 35, 11, '#000');
    text(1889, 191, '1.09594', '#fff');

    // time scale
    for (let i = 0; i < 23; i++) {
      const x = 13 + i * 64;
      line(x + .5, 944, x + .5, 947, '#000');
      text(x - 1, 956, i ? '3 Aug 17:' + (13 + i * 2) : '3 Aug 2015');
    }

    // pencil marks
    out.push(`<g transform="translate(1040 430) scale(.3333)" fill="none" stroke="#000" stroke-width="9" stroke-linecap="round" stroke-linejoin="round" shape-rendering="auto">
      <path d="M95 635l22-3 40-27 28-18 22-19 38-23 33-20 30-20 35-28 20-22 28-42 16-20 10-18 12-14 24-14 35-10 30-14 30-7 20-12 14-10 15-18 12-22 8-32 12-14 20-10 7-8M466 190h178M655 190l7 35 3 47" stroke-width="8"/>
      <path d="M112 755l10 30 14 28 13 37M116 762l35-20 21-15 12 40 10 25 13 24"/>
      <path d="M243 738l14-9 23 6-5 24-15 22-17 1-4-20zM317 735v-70l8-3 14 22 17 8"/>
      <path d="M355 649l20-10 25-12 11-22-37-1v32l10 18 12 10h33l12-10 3-10"/>
      <path d="M425 563l24-26 14-14 11-17M443 540l6 20M449 545l12 10 8 28 10 22"/>
      <path d="M499 545h30l30-16 38-20 10-18 8-27-30-1-20 25-14 28-2 36 20 27 15 5 20-2 17-12 6-13v-15"/>
      <path d="M653 506V402l18 4 22 26 12 22 13 16M704 364l22 32 18 32 13 18V325l17 20 10 24 20 30 27 36"/>
    </g>`);
    document.getElementById('chart').innerHTML = out.join('');
  </script>
</body>
</html>
